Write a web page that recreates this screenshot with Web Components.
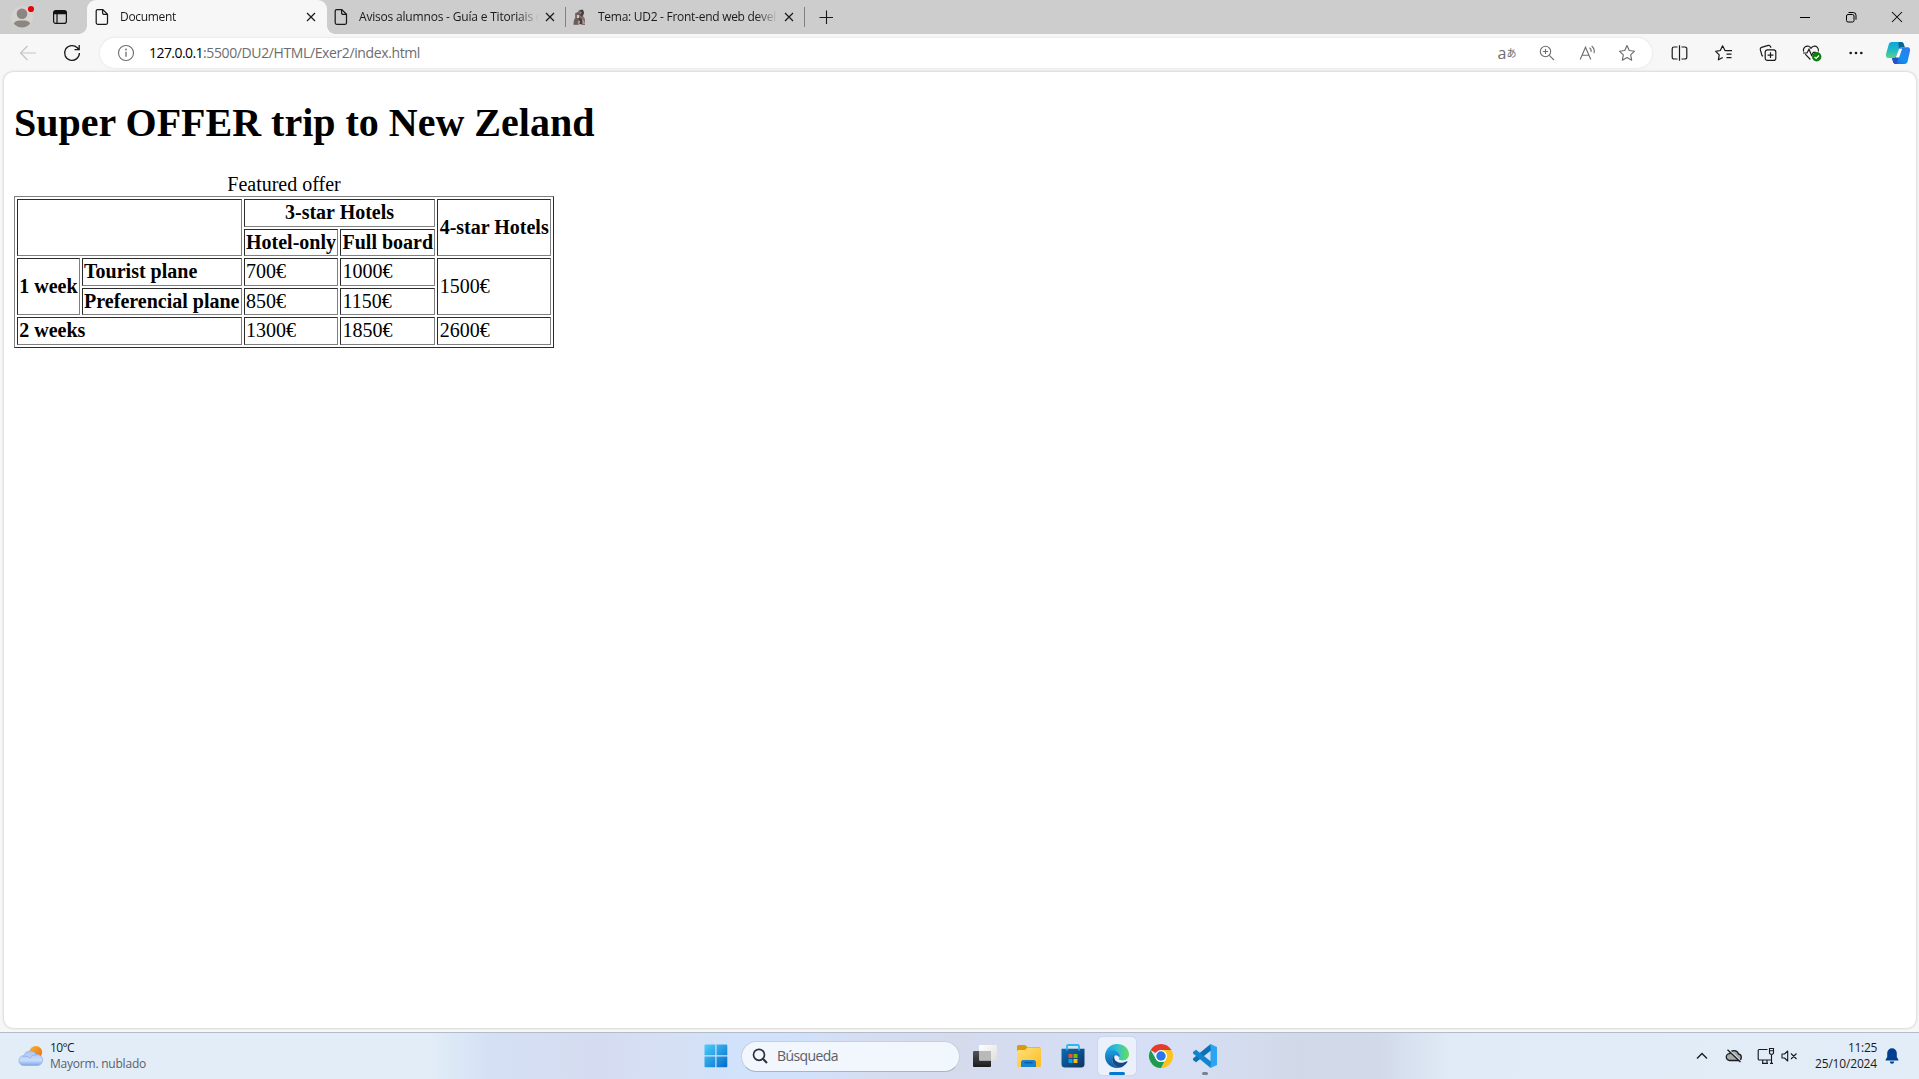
<!DOCTYPE html>
<html lang="es">
<head>
<meta charset="utf-8">
<title>Document</title>
<style>
html,body{margin:0;height:100%;overflow:hidden;background:#f7f7f7}
</style>
</head>
<body>
<desktop-screen></desktop-screen>
<script>
const define = (name, html) => {
  const t = document.createElement('template');
  t.innerHTML = html;
  customElements.define(name, class extends HTMLElement {
    constructor() {
      super();
      this.attachShadow({ mode: 'open' }).append(t.content.cloneNode(true));
    }
  });
};

/* Text that spreads its letters to take up a given width. */
customElements.define('fit-text', class extends HTMLElement {
  connectedCallback() {
    if (this.shadowRoot) return;
    this.attachShadow({ mode: 'open' }).innerHTML = '<style>:host{display:block;white-space:pre}span{display:inline-block}</style><span><slot></slot></span>';
    const span = this.shadowRoot.querySelector('span');
    const want = parseFloat(this.getAttribute('w'));
    const n = this.textContent.length;
    const fit = () => {
      span.style.letterSpacing = '0px';
      const w = span.getBoundingClientRect().width;
      if (w && want) span.style.letterSpacing = ((want - w) / n) + 'px';
    };
    fit();
    requestAnimationFrame(fit);
  }
});

/* Icons: name -> [width, height, markup] */
const icons = {
  avatar: [24, 24, '<circle cx="12" cy="12" r="11" fill="#d6d3cf"/><circle cx="12" cy="8.8" r="5.3" fill="#8b8682"/><path d="M3.8 18.8c1-3 4-3.400 8.200-3.400s7.200.4 8.200 3.400a11 11 0 0 1-16.400 0z" fill="#8b8682"/><circle cx="21" cy="4" r="3.900" fill="#d6d3cf"/><circle cx="21" cy="4" r="3.100" fill="#e8040c"/>'],
  tabs: [16, 16, '<rect x="1.600" y="1.600" width="12.800" height="12.800" rx="2.200" fill="none" stroke="#111" stroke-width="1.200"/><path d="M1.500 3.500a2 2 0 0 1 2-2h9a2 2 0 0 1 2 2V5.300h-13z" fill="#111"/><path d="M5 5v9.400" stroke="#111" stroke-width="1.200"/>'],
  file: [14, 18, '<path d="M2.700 1.500h5.100l4.700 4.700v8.600a1.500 1.500 0 0 1-1.500 1.500H2.700a1.500 1.500 0 0 1-1.500-1.500V3a1.500 1.500 0 0 1 1.500-1.500zM7.600 1.700v3.200a1.500 1.500 0 0 0 1.500 1.500h3.200" fill="none" stroke="#1a1a1a" stroke-width="1.250"/>'],
  photo: [14, 16, '<path d="M2 4 4.500 3.500 6 1l4-.5L11 4l-1 3 2 3v6H9l-2-1-2 1H.5v-3L2 9z" fill="#81706b"/><path d="M7 1l3 0 1 3-2 4-2-2zM5 8l4 2v5H7z" fill="#4a3d3f"/><path d="M1 11l3-3 2 3-2 4H1zM3 4l3-1 1 3-3 2z" fill="#6c5c5b"/><path d="M4 6h2v3H4zM6 11l1 2-2 2zM7.500 2.500l1 1-1 2z" fill="#d8c9c0"/><path d="M9 10l2 2 1 3h-2z" fill="#b09c93"/>'],
  x: [10, 10, '<path d="M1 1l8 8M9 1L1 9" stroke="#1a1a1a" stroke-width="1.200"/>'],
  plus: [14, 14, '<path d="M7.500 .5v13.500M.5 7.500h13.500" stroke="#1a1a1a" stroke-width="1.100"/>'],
  min: [10, 10, '<path d="M0 5.500h10" stroke="#000"/>'],
  restore: [12, 12, '<rect x="1.500" y="3.500" width="7.500" height="7.500" rx="1.500" fill="none" stroke="#000"/><path d="M3.500 1.500h4.700a2.800 2.800 0 0 1 2.800 2.800V8.700" fill="none" stroke="#000"/>'],
  close: [12, 12, '<path d="M1 1l10 10M11 1L1 11" stroke="#000" stroke-width="1.050"/>'],
  back: [18, 18, '<path d="M17 9H1.500M8.500 2L1.500 9l7 7" fill="none" stroke="#c5c5c5" stroke-width="1.200"/>'],
  reload: [18, 18, '<path d="M16.400 9A7.400 7.400 0 1 1 14.300 3.800L16 5.500M16.200 1v4.700h-4.700" fill="none" stroke="#1a1a1a" stroke-width="1.300"/>'],
  info: [18, 18, '<circle cx="9" cy="9" r="7.500" fill="none" stroke="#6d6d6d" stroke-width="1.100"/><path d="M9 7.800v5" stroke="#6d6d6d" stroke-width="1.300"/><circle cx="9" cy="5.500" r=".9" fill="#6d6d6d"/>'],
  zoom: [16, 16, '<circle cx="6.500" cy="6.500" r="5.200" fill="none" stroke="#6d6d6d" stroke-width="1.100"/><path d="M10.300 10.300l4.700 4.700M6.500 3.900v5.200M3.900 6.500h5.200" stroke="#6d6d6d" stroke-width="1.100"/>'],
  read: [17, 16, '<path d="M1.200 14.500L6.500 2.200l5.300 12.300M3.200 10.300h6.600M10.500 2.700a4 4 0 0 1 1.500 4.200M12.700 1a7 7 0 0 1 2.300 7.200" fill="none" stroke="#6d6d6d" stroke-width="1.100"/>'],
  star: [18, 18, '<path d="M9 1.600l2.250 4.900 5.300.7-3.900 3.650 1 5.300L9 13.550l-4.650 2.600 1-5.300L1.450 7.200l5.300-.7z" fill="none" stroke="#6d6d6d" stroke-width="1.150" stroke-linejoin="round"/>'],
  split: [17, 18, '<path d="M6.500 3H3a1.800 1.800 0 0 0-1.800 1.800v8.400A1.800 1.800 0 0 0 3 15h3.500M8.500 1.200v15.600M10.500 3H14a1.800 1.800 0 0 1 1.800 1.800v8.400A1.800 1.800 0 0 1 14 15h-3.500" fill="none" stroke="#1a1a1a" stroke-width="1.200"/>'],
  favs: [18, 18, '<path d="M10.500 6.600H10L7.600 1.800 5.300 6.500l-4.600.8 3.500 3.500-.8 5 4.400-2.300M10 6.600h7M11.500 10.100h5M11.500 13.600h5" fill="none" stroke="#1a1a1a" stroke-width="1.200" stroke-linejoin="round"/>'],
  collect: [18, 18, '<rect x="6.200" y="5.800" width="10.600" height="10.600" rx="2.200" fill="none" stroke="#1a1a1a" stroke-width="1.200"/><path d="M11.500 8.200v5.800M8.600 11.100h5.800M4 12.200 3 11.600 1.300 5.700a2 2 0 0 1 1.300-2.300l6.600-2a2 2 0 0 1 2.300 1.100l.5 1.200" fill="none" stroke="#1a1a1a" stroke-width="1.200"/>'],
  heart: [20, 18, '<path d="M1.600 7.500C.5 3.500 4.200 1.500 6.700 2.300 8 2.700 8.500 3.600 9 4.300c.5-.7 1.200-1.700 2.500-2.100 3-.7 5.700 2 4.800 5.300M3.200 10.200l5.200 5.300M1 9h4l2-3.800 2.600 6.300 1.700-3.200H14" fill="none" stroke="#1a1a1a" stroke-width="1.150"/><circle cx="14.700" cy="12.800" r="4.700" fill="#107c10"/><path d="M12.500 12.900l1.600 1.600 2.900-3" fill="none" stroke="#fff" stroke-width="1.200"/>'],
  dots: [16, 16, '<circle cx="2.700" cy="8" r="1.350" fill="#1a1a1a"/><circle cx="8" cy="8" r="1.350" fill="#1a1a1a"/><circle cx="13.300" cy="8" r="1.350" fill="#1a1a1a"/>'],
  copilot: [26, 24, '<defs><linearGradient id="a" x1="0" y1="0" x2="0" y2="1"><stop stop-color="#0aa6dd"/><stop offset=".5" stop-color="#20b9c4"/><stop offset="1" stop-color="#5ad484"/></linearGradient><linearGradient id="b" x1="1" y1="0" x2="0" y2="1"><stop stop-color="#3178e8"/><stop offset=".6" stop-color="#1590f0"/><stop offset="1" stop-color="#2454d0"/></linearGradient></defs><path d="M6.800 1H16c1.800 0 2.400 1 3 2.800l.7 2.400h-3c-2 0-2.800.9-3.400 2.800l-2 6c-.6 1.700-1.300 2-2.700 2H4c-3 0-3.600-2-2.700-5L3.600 4C4.300 1.800 5 1 6.800 1z" fill="url(#a)"/><path d="M13.500 1H16c1.800 0 2.400 1 3 2.800l.7 2.400h-3c-1.500 0-2.300.5-2.900 1.600z" fill="#0e6390"/><path d="M19.500 23H11c-2 0-2.600-1-3.100-2.800L7 17h1.600c1.500 0 2.200-.5 2.700-2l2.200-6.500c.6-1.700 1.300-2.300 3-2.300H22c3 0 3.600 2 2.700 5L22.700 20c-.7 2.200-1.400 3-3.200 3z" fill="url(#b)"/><path d="M7 17h1.600c1.500 0 2.200-.5 2.700-2l1.200-3.400L14 16l-2.500 7H11c-2 0-2.600-1-3.100-2.800z" fill="#2450c8"/><path d="M14.200 7.800h2.900l-3 8.700h-3.400z" fill="#fff"/>'],
  weather: [26, 22, '<defs><linearGradient id="s" x1="0" y1="0" x2="1" y2="1"><stop stop-color="#f7b62b"/><stop offset="1" stop-color="#ef6a10"/></linearGradient><linearGradient id="c" x1="0" y1="0" x2="0" y2="1"><stop stop-color="#a9c4f5"/><stop offset=".65" stop-color="#c9dcf9"/><stop offset="1" stop-color="#7ea5ec"/></linearGradient></defs><circle cx="17.800" cy="7.300" r="6.300" fill="url(#s)"/><path d="M6 20.500a5 5 0 0 1-.3-10A7 7 0 0 1 18.400 9.600 5.500 5.500 0 0 1 20 20.500z" fill="url(#c)" stroke="#86a8e6" stroke-width=".6"/><path d="M5 11.500c4-1 6 .5 7 2M12 13c2-3 5-3.500 7-3" fill="none" stroke="#91b1ec"/>'],
  win: [24, 24, '<defs><linearGradient id="w" gradientUnits="userSpaceOnUse" x1="0" y1="0" x2="24" y2="24"><stop stop-color="#4fd0fb"/><stop offset="1" stop-color="#0067c9"/></linearGradient></defs><path d="M.5 1.500a1 1 0 0 1 1-1h9.800v10.800H.5zM12.500.5h9.800a1 1 0 0 1 1 1v9.800H12.500zM.5 12.500h10.800v10.800H1.500a1 1 0 0 1-1-1zM12.500 12.500h10.800v9.800a1 1 0 0 1-1 1h-9.800z" fill="url(#w)"/>'],
  search: [16, 16, '<circle cx="7" cy="6.800" r="5.500" fill="none" stroke="#2b2f36" stroke-width="1.700"/><path d="M10.900 10.800l4.100 4.200" stroke="#2b2f36" stroke-width="2"/>'],
  taskview: [24, 24, '<defs><linearGradient id="t" x1="0" y1="0" x2="0" y2="1"><stop stop-color="#555"/><stop offset="1" stop-color="#1b1b1b"/></linearGradient><linearGradient id="u" x1="0" y1="0" x2="1" y2="1"><stop stop-color="#fff"/><stop offset="1" stop-color="#dedede"/></linearGradient></defs><rect y="7" width="18" height="16" rx="1" fill="url(#t)"/><rect x="6" y="1" width="18" height="15.500" rx="1" fill="url(#u)"/><path d="M6 7h12v9.500H7a1 1 0 0 1-1-1z" fill="#b9b9b9"/>'],
  folder: [24, 24, '<defs><linearGradient id="f" x1="0" y1="0" x2="1" y2="1"><stop stop-color="#ffe07a"/><stop offset="1" stop-color="#fcbd22"/></linearGradient></defs><path d="M0 2.500A1.500 1.500 0 0 1 1.500 1H8l2.500 2H22a1.500 1.500 0 0 1 1.500 1.500V10H0z" fill="#d99b0c"/><path d="M0 7.500A1.500 1.500 0 0 1 1.500 6H8l2.500-2.500H22.500A1.500 1.500 0 0 1 24 5v16.500a1.500 1.500 0 0 1-1.500 1.500h-21A1.500 1.500 0 0 1 0 21.500z" fill="url(#f)"/><path d="M4 23v-4.500A2.500 2.500 0 0 1 6.500 16h10a2.500 2.500 0 0 1 2.500 2.500V23z" fill="#1583d2"/><path d="M7.500 18.700h8" stroke="#0a5596" stroke-width="1.200"/>'],
  store: [24, 24, '<defs><linearGradient id="m" x1="0" y1="0" x2="1" y2="1"><stop stop-color="#0a6cb4"/><stop offset="1" stop-color="#12325e"/></linearGradient></defs><path d="M6 6.500V2.200A1.200 1.200 0 0 1 7.200 1h9.600A1.200 1.200 0 0 1 18 2.200v4.300" fill="none" stroke="#2bb8ec" stroke-width="1.800"/><path d="M.5 4.700h23V20a3.500 3.500 0 0 1-3.500 3.500H4A3.500 3.500 0 0 1 .5 20z" fill="url(#m)"/><path d="M6 3v3.500M18 3v3.500" stroke="#2bc4f2" stroke-width="1.400"/><path d="M7.500 10h4v4h-4z" fill="#f25022"/><path d="M12.500 10h4v4h-4z" fill="#7fba00"/><path d="M7.500 15h4v4h-4z" fill="#00a4ef"/><path d="M12.500 15h4v4h-4z" fill="#ffb900"/>'],
  edge: [24, 24, '<defs><linearGradient id="e1" x1="0" y1="0" x2="1" y2="0"><stop stop-color="#2299dd"/><stop offset=".5" stop-color="#2fc3d0"/><stop offset="1" stop-color="#68dc5b"/></linearGradient><linearGradient id="e2" x1="0" y1="0" x2="0" y2="1"><stop stop-color="#1a9de0"/><stop offset="1" stop-color="#0c59a4"/></linearGradient></defs><path d="M.2 10.500C1 4.500 6 0 12 0c7 0 12 4.800 12 10.200 0 3.700-2.800 6.200-6.200 6.200-2.300 0-3.900-.8-3.900-1.700 0-.6 1-1.200 1-3 0-2.500-2.300-4.900-5.700-4.900-4.200 0-7.500 1.700-9 3.700z" fill="url(#e1)"/><path d="M0 12c0-3.500 3-6 7.500-6 4 0 7.400 2.500 7.400 5.700 0 .8-.3 1.500-.7 2-.7-1.500-2-2.500-3.700-2.300-3 .3-3.700 3.400-3.200 5.700.7 3.600 3.600 6 6.800 6.700-.7.1-1.400.2-2.100.2C5.400 24 0 18.600 0 12z" fill="url(#e2)"/><path d="M7.300 17.100c-.5-2.300.1-4.900 2.300-5.500-1.200 2.300.4 7 5.900 7.200 2.500.1 4.700-.7 6.300-1.600.5-.2.900.2.600.7-1.800 3-4.700 5.300-8.300 5.900-3.200-.7-6.100-3.100-6.800-6.700z" fill="#114a8b"/>'],
  chrome: [24, 24, '<path d="M12 12L1.600 6A12 12 0 0 1 22.400 6z" fill="#e33b2e"/><path d="M12 6h10.400A12 12 0 0 1 12 24l5.200-9z" fill="#fcc31e"/><path d="M12 24A12 12 0 0 1 1.600 6l5.200 9a6 6 0 0 0 5.200 3l3.300-.2z" fill="#1e9c4b"/><circle cx="12" cy="12" r="6" fill="#fff"/><circle cx="12" cy="12" r="4.700" fill="#2878ea"/>'],
  code: [24, 24, '<path d="M17.500 0 24 3v18l-6.500 3z" fill="#2ba5f3"/><path d="M17.600 0 18 6.500 3 18.200 0 16v-1.600z" fill="#0b72b9"/><path d="M17.600 24 18 17.500 3 5.800 0 8v1.600z" fill="#1284cd"/>'],
  chev: [12, 8, '<path d="M1 6.500L6 1.500l5 5" fill="none" stroke="#1b1b1b" stroke-width="1.400"/>'],
  cloud: [18, 16, '<path d="M4.800 12.500a3.400 3.400 0 0 1-.2-6.800A4.700 4.700 0 0 1 13.500 6a3.300 3.300 0 0 1 .1 6.500z" fill="#a8abae" stroke="#1b1b1b" stroke-width="1.300"/><path d="M4 2l12 11.500" stroke="#e3edf7" stroke-width="1.600"/><path d="M2.500 1.800l13 12.200" stroke="#1b1b1b" stroke-width="1.300"/>'],
  net: [18, 18, '<path d="M10.500 2.500H2.200a1 1 0 0 0-1 1v8.500a1 1 0 0 0 1 1h11.600M5 16.300h6M5.700 13v3M10 13v3M14.500 7.500v8.800M13 16.300h3" fill="none" stroke="#1b1b1b" stroke-width="1.150"/><path d="M12.500 1.500h4v4.700l-1 1h-2l-1-1zM12.500 3.800h4" fill="none" stroke="#1b1b1b" stroke-width="1.100"/>'],
  mute: [17, 14, '<path d="M1 5v4h2.500L6.700 12V2L3.500 5zM10 4.500l5.500 5.500M15.500 4.500L10 10" fill="none" stroke="#1b1b1b" stroke-width="1.100" stroke-linejoin="round"/>'],
  bell: [14, 16, '<path d="M7 .3A4.800 4.800 0 0 1 11.800 5.100V9l1.500 2.500c.3.600 0 1-.6 1H1.300c-.6 0-.9-.4-.6-1L2.200 9V5.100A4.800 4.800 0 0 1 7 .3zM4.800 13.500h4.400a2.200 2.200 0 0 1-4.400 0z" fill="#003e92"/>']
};
customElements.define('ui-icon', class extends HTMLElement {
  connectedCallback() {
    if (this.shadowRoot) return;
    const [w, h, body] = icons[this.getAttribute('name')];
    this.attachShadow({ mode: 'open' }).innerHTML = `<style>:host{display:flex;flex:none;width:${w}px;height:${h}px}svg{display:block;overflow:visible}</style><svg width="${w}" height="${h}" viewBox="0 0 ${w} ${h}">${body}</svg>`;
  }
});

define('browser-tab', `<style>
:host{display:flex;align-items:center;box-sizing:border-box;width:239px;height:34px;padding-left:7px;position:relative}
.ic{width:25px;display:flex}
.title{width:180px;overflow:hidden;-webkit-mask-image:linear-gradient(90deg,#000 158px,transparent 180px)}
.x{margin-left:6px}
:host([active]){background:#f7f7f7;border-radius:9px 9px 0 0;width:240px;padding-left:8px}
:host([active])::before,:host([active])::after{content:"";position:absolute;bottom:0;width:8px;height:8px}
:host([active])::before{left:-8px;background:radial-gradient(circle at 0 0,transparent 7.500px,#f7f7f7 8px)}
:host([active])::after{right:-8px;background:radial-gradient(circle at 100% 0,transparent 7.500px,#f7f7f7 8px)}
:host([line])::after{content:"";position:absolute;right:0;top:7px;width:1px;height:20px;background:#808080}
</style><div class="ic"><slot name="icon"></slot></div><div class="title"><slot></slot></div><ui-icon class="x" name="x"></ui-icon>`);

define('tab-strip', `<style>
:host{display:flex;height:34px;background:#cdcdcd;font:12px/34px "Open Sans","Noto Sans",sans-serif;color:#1a1a1a}
.left{width:87px;display:flex;align-items:center;box-sizing:border-box;padding-left:10px;gap:18px}
.new{display:flex;align-items:center;padding-left:14px}
.win{margin:0 -1px 0 auto;display:flex;align-items:center}
.win div{width:46px;display:flex;justify-content:center}
</style>
<div class="left"><ui-icon name="avatar"></ui-icon><ui-icon name="tabs"></ui-icon></div>
<browser-tab active><ui-icon slot="icon" name="file"></ui-icon><fit-text w="56">Document</fit-text></browser-tab>
<browser-tab line><ui-icon slot="icon" name="file"></ui-icon><fit-text w="184">Avisos alumnos - Guía e Titoriais d</fit-text></browser-tab>
<browser-tab line><ui-icon slot="icon" name="photo"></ui-icon><fit-text w="178">Tema: UD2 - Front-end web devel</fit-text></browser-tab>
<div class="new"><ui-icon name="plus"></ui-icon></div>
<div class="win"><div><ui-icon name="min"></ui-icon></div><div><ui-icon name="restore"></ui-icon></div><div><ui-icon name="close"></ui-icon></div></div>`);

define('tool-bar', `<style>
:host{display:flex;align-items:center;height:38px;box-sizing:border-box;background:#f7f7f7;font:14px/30px "Open Sans","Noto Sans",sans-serif}
.nav{display:flex;width:100px;box-sizing:border-box;padding-left:19px;gap:26px}
.bar{display:flex;align-items:center;box-sizing:border-box;width:1552px;height:30px;border-radius:15px;background:#fff;padding-left:17px;box-shadow:0 0 3px #0000001a}
.url{display:flex;margin-left:14px}
.url .dim{color:#6d6d6d}
.acts{margin-left:auto;display:flex;padding-right:5px}
.acts div,.tools div{width:40px;display:flex;justify-content:center;align-items:center}
.lang{color:#6d6d6d;font:16px/18px "Open Sans",sans-serif}
.lang span{font:10px/18px "Noto Sans CJK JP",sans-serif}
.tools{display:flex;padding-left:5px}
.tools div{width:44.400px}
</style>
<div class="nav"><ui-icon name="back"></ui-icon><ui-icon name="reload"></ui-icon></div>
<div class="bar"><ui-icon name="info"></ui-icon><div class="url"><fit-text w="54">127.0.0.1</fit-text><fit-text class="dim" w="217">:5500/DU2/HTML/Exer2/index.html</fit-text></div>
<div class="acts"><div class="lang">a<span>あ</span></div><div><ui-icon name="zoom"></ui-icon></div><div><ui-icon name="read"></ui-icon></div><div><ui-icon name="star"></ui-icon></div></div></div>
<div class="tools"><div><ui-icon name="split"></ui-icon></div><div><ui-icon name="favs"></ui-icon></div><div><ui-icon name="collect"></ui-icon></div><div><ui-icon name="heart"></ui-icon></div><div style="width:43px"><ui-icon name="dots"></ui-icon></div><div style="width:40px"><ui-icon name="copilot"></ui-icon></div></div>`);

define('offer-page', `<style>
:host{display:block;box-sizing:border-box;flex:1;margin:0 3px 4px 4px;padding:1px 10px 0;background:#fff;border-radius:9px;box-shadow:0 0 3px #00000040;font:20px "Liberation Serif","Times New Roman",serif;color:#000}
h1{font-size:40px;line-height:46px;margin:27px 0 27px}
table{border:1px solid;border-color:#808080 #2b2b2b #2b2b2b #808080;border-spacing:2px;width:540px}
caption{line-height:23px}
td,th{border:1px solid;border-color:#2b2b2b #808080 #808080 #2b2b2b;padding:1.250px;line-height:23px}
.l{text-align:left}
</style>
<h1>Super OFFER trip to New Zeland</h1>
<table><caption>Featured offer</caption>
<tr><th colspan="2" rowspan="2"></th><th colspan="2">3-star Hotels</th><th rowspan="2">4-star Hotels</th></tr>
<tr><th>Hotel-only</th><th>Full board</th></tr>
<tr><th rowspan="2">1 week</th><th class="l">Tourist plane</th><td>700€</td><td>1000€</td><td rowspan="2">1500€</td></tr>
<tr><th>Preferencial plane</th><td>850€</td><td>1150€</td></tr>
<tr><th colspan="2" class="l">2 weeks</th><td>1300€</td><td>1850€</td><td>2600€</td></tr></table>`);

define('task-bar', `<style>
:host{display:flex;align-items:center;box-sizing:border-box;height:47px;border-top:1px solid #b3bcc9;background:linear-gradient(90deg,#e2edf8 0,#e2edf8 430px,#d5e0f4 490px,#d5dcf1 600px,#d6e0f4 670px,#d1e2fb 740px,#d1e1fb 800px,#d6ddf1 870px,#d5dbed 960px,#d5def6 1100px,#d6dff4 1180px,#d1d9e8 1300px,#d2daea 1380px,#e0ebf7 1450px,#e2edf8 100%);font:12px/16px "Open Sans","Noto Sans",sans-serif;color:#1b1b1b}
.weather{display:flex;align-items:center;width:704px;box-sizing:border-box;padding-left:18px;gap:6px}
.sub{color:#5a6068}
.search{display:flex;align-items:center;box-sizing:border-box;width:219px;height:31px;margin:0 0 0 13px;padding-left:10px;gap:9px;border-radius:16px;background:#f2f6fd;border:1px solid #c6cfdf;border-bottom-color:#a9b4c6;font-size:14px;color:#5c6066}
.apps{display:flex;padding-left:6px;gap:6px}
.apps div{position:relative;width:38px;height:38px;border-radius:4px;display:flex;align-items:center;justify-content:center}
.apps .on{background:#ebf0fa;box-shadow:0 0 1px #8f9bb3}
.on::after,.run::after{content:"";position:absolute;bottom:0;width:16px;height:3px;border-radius:2px;background:#0078d4}
.run::after{width:6px;background:#7b818c}
.tray{display:flex;align-items:center;margin-left:auto;padding-right:20px}
.clock{display:flex;flex-direction:column;align-items:flex-end;margin-right:8px}
</style>
<div class="weather"><ui-icon name="weather"></ui-icon><div><fit-text w="24">10°C</fit-text><fit-text class="sub" w="96">Mayorm. nublado</fit-text></div></div>
<ui-icon name="win"></ui-icon>
<div class="search"><ui-icon name="search"></ui-icon><fit-text w="61">Búsqueda</fit-text></div>
<div class="apps"><div><ui-icon name="taskview"></ui-icon></div><div><ui-icon name="folder"></ui-icon></div><div><ui-icon name="store"></ui-icon></div><div class="on"><ui-icon name="edge"></ui-icon></div><div><ui-icon name="chrome"></ui-icon></div><div class="run"><ui-icon name="code"></ui-icon></div></div>
<div class="tray"><ui-icon name="chev" style="margin-right:17px"></ui-icon><ui-icon name="cloud" style="margin-right:14px"></ui-icon><ui-icon name="net" style="margin-right:6px"></ui-icon><ui-icon name="mute" style="margin-right:17px"></ui-icon><div class="clock"><fit-text w="29">11:25</fit-text><fit-text w="62">25/10/2024</fit-text></div><ui-icon name="bell"></ui-icon></div>`);

define('desktop-screen', `<style>
:host{display:flex;flex-direction:column;width:1919px;height:1079px;overflow:hidden;background:#f7f7f7}
tab-strip,tool-bar,task-bar{flex:none}
</style><tab-strip></tab-strip><tool-bar></tool-bar><offer-page></offer-page><task-bar></task-bar>`);
</script>
</body>
</html>
